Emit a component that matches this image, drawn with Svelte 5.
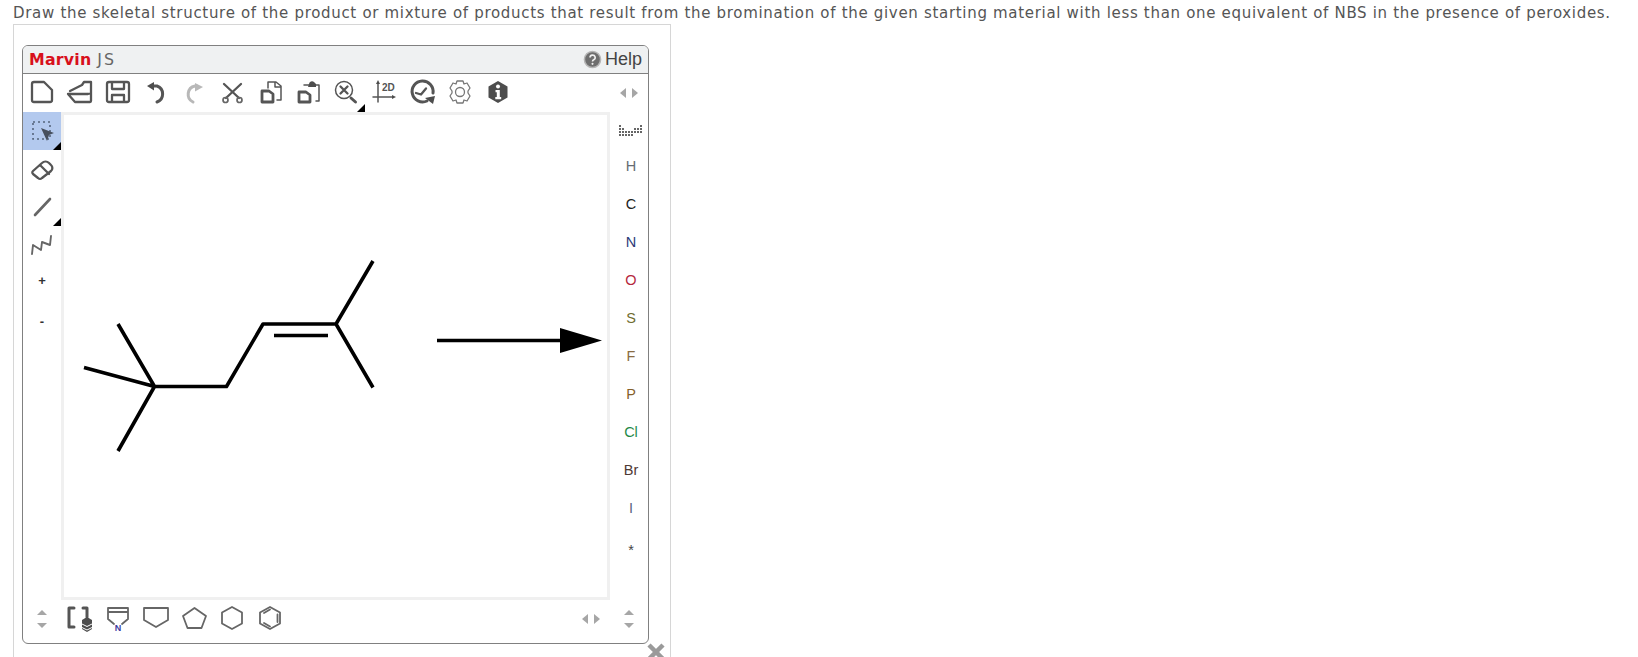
<script>
  const elements = [
    ['H', '#666c72'], ['C', '#222222'], ['N', '#2c3a78'], ['O', '#b5283c'], ['S', '#6f6d30'],
    ['F', '#8a6c42'], ['P', '#85602a'], ['Cl', '#1f8a48'], ['Br', '#4f3a34'], ['I', '#5d5f80'], ['*', '#444444']
  ];
</script>

<div class="page">
  <p class="prompt">Draw the skeletal structure of the product or mixture of products that result from the bromination of the given starting material with less than one equivalent of NBS in the presence of peroxides.</p>
  <div class="frame">
    <div class="marvin">
      <header class="title">
        <span class="brand"><b>Marvin</b> <span class="js">JS</span></span>
        <span class="help">
          <svg class="help-icon" viewBox="0 0 20 20" aria-hidden="true">
            <circle cx="10" cy="10" r="8.5" fill="#6e6e6e" stroke="#b5b5b5" stroke-width="1.6" />
            <path d="M7.4 8a2.7 2.6 0 1 1 3.9 2.3c-.9.5-1.3 1-1.3 1.9" fill="none" stroke="#eee" stroke-width="1.7" />
            <circle cx="10" cy="14.6" r="1.1" fill="#eee" />
          </svg>
          Help
        </span>
      </header>

      <div class="top">
        <div class="tools">
          <svg class="ico" viewBox="0 0 38 38"><path class="dark" d="M9 10a2 2 0 0 1 2-2h10l8 8v10a2 2 0 0 1-2 2H11a2 2 0 0 1-2-2z" /></svg>
          <svg class="ico" viewBox="0 0 38 38"><path class="dark" d="M7 20h20l3-1M7 20l7 8h15a1 1 0 0 0 1-1V8h-7l-2 3-12 6" /></svg>
          <svg class="ico" viewBox="0 0 38 38"><path class="dark" d="M8 10a2 2 0 0 1 2-2h18a2 2 0 0 1 2 2v16a2 2 0 0 1-2 2H10a2 2 0 0 1-2-2z M13 8v7h12V8 M13 28v-7h12v7" /></svg>
          <svg class="ico" viewBox="0 0 38 38"><path class="dark heavy" d="M15 12h5a8.500 8.500 0 0 1 0 16" /><path class="solid" d="M10 12l7-4v8.500z" /></svg>
          <svg class="ico" viewBox="0 0 38 38"><path class="soft heavy" d="M22 12h-2a8.500 8.500 0 0 0-2 16" /><path class="soft-fill" d="M28 13l-8-4v8.500z" /></svg>
          <svg class="ico" viewBox="0 0 38 38"><path class="dark" d="M11 10l15 14M28 10L13 24" /><circle class="mid" cx="12.500" cy="26" r="2.500" /><circle class="mid" cx="26.500" cy="26" r="2.500" /></svg>
          <svg class="ico" viewBox="0 0 38 38"><path class="dark thick" d="M11 17h7l4 3v8H11z" /><path class="dark thin" d="M17 14V8h8l5 4v14h-4M24 8v5h5" /></svg>
          <svg class="ico" viewBox="0 0 38 38"><path class="dark thick" d="M10 18h7l4 3v7H10z" /><path class="dark thin" d="M15 11h15v16h-3" /><path class="solid" d="M20 10a3 3 0 0 1 5-2l2 2v3h-8z" /></svg>
          <div class="cell corner">
            <svg class="ico" viewBox="0 0 38 38"><circle class="dark thin" cx="17" cy="16" r="8.500" /><path class="dark" d="M13.500 12.500l7 7M20.500 12.500l-7 7" /><path class="dark heavy" d="M24 24l4.500 4" /></svg>
          </div>
          <svg class="ico" viewBox="0 0 38 38"><path class="dark thin" d="M13 9v19M8 23h20" /><path class="solid" d="M13 6l-2 4h4zM31 23l-4-2v4z" /><text x="17" y="16.500" class="label-2d">2D</text></svg>
          <svg class="ico" viewBox="0 0 38 38"><path class="dark heavy" d="M24 27a10.500 10.500 0 1 1 6-8" /><path class="dark" d="M13 19l5 1.500 5-6" /><path class="solid" d="M22 24l10-2-2 8z" /></svg>
          <svg class="ico" viewBox="0 0 38 38"><path class="gear" d="M16 7h6l1 3 3-1 3 5-2 3v2l2 3-3 5-3-1-1 3h-6l-1-3-3 1-3-5 2-3v-2l-2-3 3-5 3 1z" /><circle class="gear" cx="19" cy="18" r="4.500" /></svg>
          <svg class="ico" viewBox="0 0 38 38"><path class="solid" d="M19 7l9.500 5.500v11L19 29l-9.500-5.500v-11z" /><circle cx="19" cy="12.500" r="2" fill="#fff" /><path d="M16.500 16h4.300v7h1.400v2.300h-5.900V23h1.500v-4.700h-1.300z" fill="#fff" /></svg>
        </div>
        <div class="pager"><i class="tri l"></i><i class="tri r"></i></div>
      </div>

      <div class="middle">
        <div class="left">
          <div class="cell selected corner">
            <svg class="ico" viewBox="0 0 38 38"><rect x="10" y="10" width="17" height="17" fill="none" stroke="#56657c" stroke-width="1.600" stroke-dasharray="2 3" /><path fill="#47505e" d="M18 16l13 5-5 2-2 6z" /></svg>
          </div>
          <div class="cell">
            <svg class="ico" viewBox="0 0 38 38"><path class="dark" d="M10 21l9-8a5 5 0 0 1 7 0l2 2a4 4 0 0 1 0 6l-9 7a3 3 0 0 1-4 0l-5-4a2 2 0 0 1 0-3zM17 15l9 9" /></svg>
          </div>
          <div class="cell corner">
            <svg class="ico" viewBox="0 0 38 38"><path class="mid-line" d="M12 27L27 11" /></svg>
          </div>
          <div class="cell">
            <svg class="ico" viewBox="0 0 38 38"><path class="chain" d="M9 28l1-9 8 5 1-8 8 3 1-9" /></svg>
          </div>
          <div class="cell charge plus">+</div>
          <div class="cell charge">-</div>
        </div>

        <div class="canvas">
          <svg class="sketch" viewBox="64 115 543 482" aria-label="Starting material and reaction arrow">
            <path class="bond" d="M118 324L154.500 386.500L84 367.500M154.500 386.500L118 451M154.500 386.500H226.500L263 324H336L373 261M336 324L373 387.500M274 335.500H328M437 340.500H562" />
            <path d="M560 328L602 340.500L560 353z" fill="#000" />
          </svg>
        </div>

        <div class="right">
          <div class="cell dots">
            <svg class="ico" viewBox="0 0 38 38"><g fill="#666"><rect x="8" y="14" width="2" height="2"/><rect x="8" y="17" width="2" height="2"/><rect x="8" y="20" width="2" height="2"/><rect x="8" y="23" width="2" height="2"/><rect x="11" y="17" width="2" height="2"/><rect x="11" y="20" width="2" height="2"/><rect x="11" y="23" width="2" height="2"/><rect x="14" y="20" width="2" height="2"/><rect x="14" y="23" width="2" height="2"/><rect x="17" y="20" width="2" height="2"/><rect x="17" y="23" width="2" height="2"/><rect x="20" y="20" width="2" height="2"/><rect x="20" y="23" width="2" height="2"/><rect x="23" y="17" width="2" height="2"/><rect x="23" y="20" width="2" height="2"/><rect x="26" y="17" width="2" height="2"/><rect x="26" y="20" width="2" height="2"/><rect x="29" y="14" width="2" height="2"/><rect x="29" y="17" width="2" height="2"/><rect x="29" y="20" width="2" height="2"/></g></svg>
          </div>
          {#each elements as [sym, color]}
            <div class="cell el" class:star={sym === '*'} style="color: {color}">{sym}</div>
          {/each}
        </div>
      </div>

      <div class="bottom">
        <div class="cell"><span class="updown"><i class="tri u"></i><i class="tri d"></i></span></div>
        <div class="cell">
          <svg class="ico" viewBox="0 0 38 38"><path class="dark heavy" d="M13 8H8v19h5M22 8h4v9" /><path class="solid" d="M21 20l5-3 5 3v9l-5 3-5-3z" /><path d="M21 24l5 2.500 5-2.500M21 27.500l5 2.500 5-2.500" fill="none" stroke="#fff" stroke-width="1" /></svg>
        </div>
        <div class="cell">
          <svg class="ico" viewBox="0 0 38 38"><path class="ring" d="M9 8h20v11l-6 5M9 8v11l6 5M9 12h20" /><text x="19" y="31" class="nlabel">N</text></svg>
        </div>
        <div class="cell"><svg class="ico" viewBox="0 0 38 38"><path class="ring" d="M7 8h24v12l-12 7-12-7z" /></svg></div>
        <div class="cell"><svg class="ico" viewBox="0 0 38 38"><path class="ring" d="M19.500 8L31 16l-4.500 12h-14L8 16z" /></svg></div>
        <div class="cell"><svg class="ico" viewBox="0 0 38 38"><path class="ring" d="M19 7l10 5.500v11L19 29 9 23.500v-11z" /></svg></div>
        <div class="cell"><svg class="ico" viewBox="0 0 38 38"><path class="ring" d="M19 7l10 5.500v11L19 29 9 23.500v-11z" /><path class="ring" d="M26.500 14.500v7.500M19 9.500l-6 3.500M19 26.500l-6-3.500" /></svg></div>
        <div class="grow"></div>
        <div class="pager"><i class="tri l"></i><i class="tri r"></i></div>
        <div class="cell"><span class="updown"><i class="tri u"></i><i class="tri d"></i></span></div>
      </div>
    </div>
    <svg class="close" viewBox="0 0 20 20" aria-hidden="true"><path d="M3 3l14 14M17 3L3 17" stroke="#9a9a9a" stroke-width="4.500" /></svg>
  </div>
</div>

<style>
  :global(body) { margin: 0; background: #fff; overflow: hidden; }

  .page {
    width: 1638px;
    height: 657px;
    overflow: hidden;
    box-sizing: border-box;
    padding: 2px 0 0 13px;
    font-family: "DejaVu Sans", Verdana, sans-serif;
    color: #444;
  }

  .prompt {
    margin: 0;
    font-size: 15px;
    line-height: 22px;
    letter-spacing: 0.687px;
    white-space: nowrap;
    color: #555;
  }

  .frame {
    position: relative;
    width: 658px;
    height: 640px;
    box-sizing: border-box;
    padding: 20px 0 0 8px;
    border: 1px solid #d6d6d6;
    border-bottom: 0;
  }

  .marvin {
    width: 627px;
    height: 599px;
    box-sizing: border-box;
    border: 1px solid #808080;
    border-radius: 6px;
    display: flex;
    flex-direction: column;
    overflow: hidden;
  }

  .title {
    flex: none;
    height: 28px;
    box-sizing: border-box;
    background: #eff1f2;
    border-bottom: 1px solid #808080;
    display: flex;
    align-items: center;
    justify-content: space-between;
    padding: 0 6px;
    font-size: 15.8px;
  }

  .brand { color: #666; }
  .brand b { color: #d8101c; letter-spacing: 0.2px; }
  .js { letter-spacing: 2px; margin-left: 1px; }

  .help {
    display: flex;
    align-items: center;
    gap: 3px;
    font-family: "Liberation Sans", Arial, sans-serif;
    font-size: 18px;
    color: #444;
  }

  .help-icon { width: 19px; height: 19px; }

  .top {
    flex: none;
    height: 38px;
    display: flex;
    justify-content: space-between;
  }

  .tools { display: flex; }

  .ico { width: 38px; height: 38px; display: block; flex: none; }

  .middle {
    flex: none;
    height: 488px;
    display: grid;
    grid-template-columns: 38px 1fr 38px;
  }

  .left, .right { display: flex; flex-direction: column; }

  .cell {
    flex: none;
    width: 38px;
    height: 38px;
    display: flex;
    align-items: center;
    justify-content: center;
    position: relative;
  }

  .selected { background: #b3c9ee; }

  .corner::after {
    content: "";
    position: absolute;
    right: 0;
    bottom: 0;
    border-style: solid;
    border-width: 0 0 8px 8px;
    border-color: transparent transparent #000 transparent;
  }

  .charge {
    font-family: "Liberation Sans", Arial, sans-serif;
    font-size: 13px;
    font-weight: 700;
    color: #333;
  }

  .plus { box-sizing: border-box; padding-bottom: 5px; }

  .canvas {
    box-sizing: border-box;
    height: 488px;
    border: 3px solid #f0f0f0;
    background: #fff;
  }

  .sketch { width: 100%; height: 100%; display: block; }

  .bond {
    fill: none;
    stroke: #000;
    stroke-width: 3.6px;
    stroke-linejoin: round;
  }

  .right .cell { width: 40px; margin-left: 1px; }
  .right .dots { height: 35px; margin-left: 0; }
  .right .star { margin-top: 4px; }

  .el {
    font-family: "Liberation Sans", Arial, sans-serif;
    font-size: 14.5px;
  }

  .bottom {
    flex: 1;
    display: flex;
    align-items: flex-start;
  }

  .grow { flex: 1; }

  .pager {
    width: 38px;
    height: 38px;
    flex: none;
    display: flex;
    align-items: center;
    justify-content: center;
    gap: 6px;
  }

  .updown {
    display: flex;
    flex-direction: column;
    align-items: center;
    gap: 8px;
  }

  .tri { display: block; width: 0; height: 0; border-style: solid; border-color: transparent; }
  .tri.l { border-width: 5px 6px 5px 0; border-right-color: #a6a6a6; }
  .tri.r { border-width: 5px 0 5px 6px; border-left-color: #a6a6a6; }
  .tri.u { border-width: 0 5px 5px; border-bottom-color: #a6a6a6; }
  .tri.d { border-width: 5px 5px 0; border-top-color: #a6a6a6; }

  .dark, .mid, .soft, .ring, .chain, .mid-line, .gear {
    fill: none;
    stroke-linejoin: round;
    stroke-linecap: round;
  }
  .dark { stroke: #555; stroke-width: 2.3; }
  .dark.thin { stroke-width: 1.5; }
  .dark.thick { stroke-width: 2.8; }
  .dark.heavy, .soft.heavy { stroke-width: 3; }
  .mid { stroke: #666; stroke-width: 1.7; }
  .soft { stroke: #b8b8b8; }
  .soft-fill { fill: #b8b8b8; }
  .solid { fill: #4d4d4d; }
  .ring { stroke: #666; stroke-width: 1.8; }
  .chain { stroke: #666; stroke-width: 1.9; }
  .mid-line { stroke: #666; stroke-width: 2.6; }
  .gear { stroke: #777; stroke-width: 1.3; }

  .label-2d {
    font-family: "Liberation Sans", Arial, sans-serif;
    font-size: 10px;
    font-weight: 700;
    fill: #555;
  }

  .nlabel {
    font-family: "Liberation Sans", Arial, sans-serif;
    font-size: 9px;
    font-weight: 700;
    fill: #3d3da0;
    text-anchor: middle;
  }

  .close {
    position: absolute;
    left: 632px;
    bottom: 2px;
    width: 20px;
    height: 20px;
  }
</style>
